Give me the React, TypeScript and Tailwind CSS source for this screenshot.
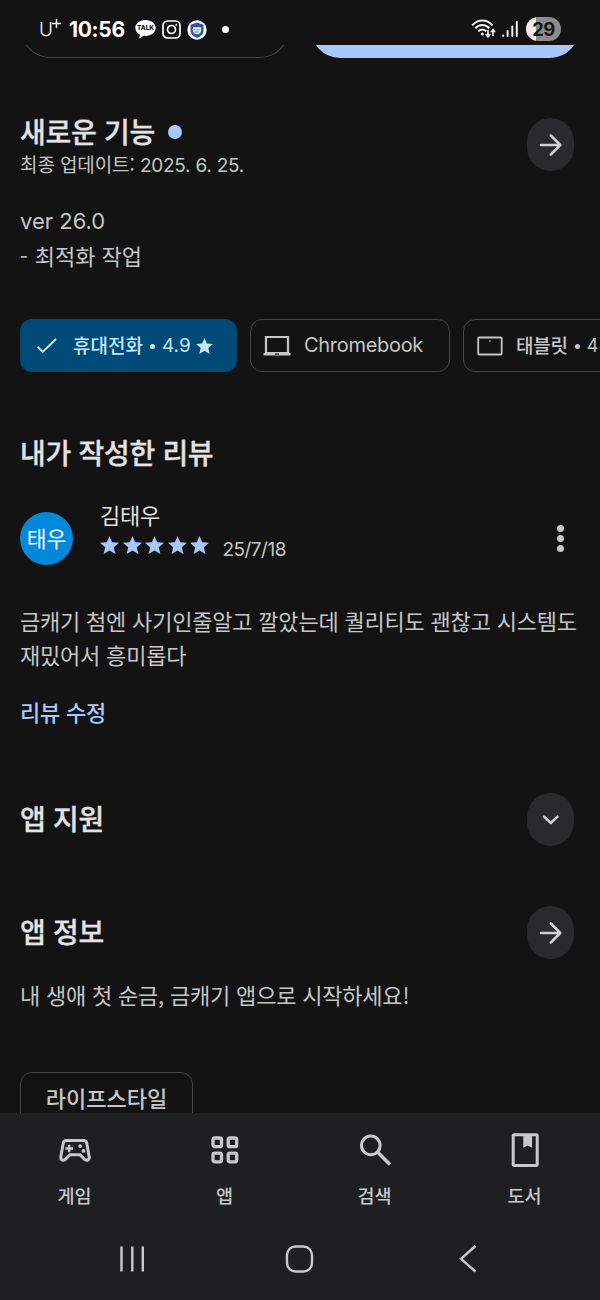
import type { ReactNode } from "react";
import clsx from "clsx";

const STAR = "M12 17.270L18.180 21l-1.640-7.030L22 9.240l-7.190-.610L12 2 9.190 8.630 2 9.240l5.460 4.730L5.820 21z";

function Latin({ children, className }: { children: ReactNode; className?: string }) {
  return <span className={clsx("font-['Inter','Noto_Sans_CJK_KR',sans-serif]", className)}>{children}</span>;
}

function StatusBar() {
  return (
    <header className="flex h-[45px] shrink-0 items-start pl-[39px] pr-[39px] pt-[17px] text-white">
      <div className="flex h-[25px] w-[30px] items-center font-['Inter',sans-serif]">
        <span className="text-[19px] font-light leading-[25px] tracking-[-0.6px]">U</span>
        <svg className="-mt-[12px]" width="9" height="9" viewBox="0 0 9 9" stroke="currentColor" strokeWidth="1.5">
          <path d="M4.5 0v9M0 4.5h9" />
        </svg>
      </div>
      <span className="w-[66px] whitespace-nowrap font-['Inter',sans-serif] text-[21px] font-bold leading-[25px] tracking-[-0.3px]">
        10:56
      </span>
      <svg className="mt-[2px]" width="21" height="21" viewBox="0 0 21 21">
        <path
          fill="#fff"
          d="M10.5 1C4.8 1 .3 4.500 .3 9c0 2.900 1.900 5.400 4.700 6.800l-.8 3.700 4.300-2.700c.7.1 1.300.1 2 .1 5.700 0 10.200-3.500 10.200-7.900S16.200 1 10.500 1z"
        />
        <text x="10.5" y="11.4" textAnchor="middle" fontFamily="Inter" fontWeight="800" fontSize="6.4" fill="#151515">
          TALK
        </text>
      </svg>
      <svg className="ml-[6px] mt-[3px]" width="19" height="19" viewBox="0 0 19 19" fill="none" stroke="#fff" strokeWidth="1.7">
        <rect x="1" y="1" width="17" height="17" rx="4.5" />
        <circle cx="9.5" cy="9.5" r="4" />
        <circle cx="14.3" cy="4.7" r="1" fill="#fff" stroke="none" />
      </svg>
      <svg className="ml-[6px] mt-[3px]" width="20" height="20" viewBox="0 0 20 20">
        <circle cx="10" cy="10" r="9.7" fill="#fff" />
        <path d="M10 2.500l6.500 2.300v5.400c0 3.700-2.700 6.200-6.500 7.700-3.800-1.500-6.500-4-6.500-7.700V4.800z" fill="#2c58a5" />
        <path d="M6 7.300h8v3.400c0 2.200-1.800 3.600-4 3.600s-4-1.400-4-3.600z" fill="#eef1f5" />
        <path d="M5 9.700h8" stroke="#d6a34c" strokeWidth="1.2" />
        <path d="M7.800 12h4" stroke="#4e78ba" />
      </svg>
      <span className="ml-[15px] mt-[9px] size-[7px] rounded-full bg-white" />
      <div className="ml-auto flex items-start">
        <svg className="mt-[2px]" width="26" height="20" viewBox="0 0 26 20" fill="none" stroke="#f1f1f1" strokeWidth="2">
          <path d="M1.200 6.300C7-.1 15.800-.1 21.500 6.300" />
          <path d="M4.300 9.300c4-4.300 10-4.300 14 0" />
          <path d="M7.300 12.400c2.500-2.500 5.600-2.500 8 0" />
          <circle cx="11.3" cy="15" r="1.5" fill="#f1f1f1" stroke="none" />
          <path d="M17 11v6M22 17v-5" strokeWidth="1.6" />
          <path d="M14 15.200h6l-3 4zM19 13.300h6l-3-4z" fill="#f1f1f1" stroke="none" />
        </svg>
        <svg className="ml-[5px] mt-[3px]" width="16" height="18" viewBox="0 0 16 18" stroke="#f1f1f1" strokeWidth="2" strokeLinecap="round">
          <path d="M1.200 15.500v.5M5.600 11v5M10.300 6.500V16M14.800 2v14" />
        </svg>
        <span className="ml-[8px] flex h-[24px] w-[35px] items-center justify-center rounded-full bg-[linear-gradient(90deg,#ececec_29%,#8c8c8c_29%)] font-['Inter',sans-serif] text-[18.5px] font-bold leading-none tracking-[-0.6px] text-[#171717]">
          29
        </span>
      </div>
    </header>
  );
}

function RoundButton({ icon }: { icon: "arrow" | "chevron" }) {
  return (
    <button className="flex h-[53px] w-[47px] items-center justify-center rounded-full bg-[#282a2c]">
      <svg width="24" height="24" viewBox="0 0 24 24" fill="none" stroke="#d0d0d0" strokeWidth="2.5" strokeLinecap="round" strokeLinejoin="round">
        {icon === "arrow" ? <path d="M2 12h19M11.800 2.500l9.500 9.500-9.500 9.500" /> : <path d="M5 8.700L11.800 15l6.700-6.300" />}
      </svg>
    </button>
  );
}

function SectionTitle({ children }: { children: ReactNode }) {
  return (
    <h2 className="text-[28px] font-medium leading-[34px] tracking-[-0.3px] text-[#e3e3e3] [-webkit-text-stroke:0.3px]">
      {children}
    </h2>
  );
}

function DeviceChips() {
  return (
    <div className="mt-[46px] flex h-[53px] gap-[14px] overflow-hidden text-[19px] font-medium leading-[27px] text-[#c4c7c5]">
      <div className="flex w-[217px] shrink-0 items-center rounded-[12px] bg-[#004a77] pl-[16px] text-[#c2e7ff]">
        <svg width="22" height="18" viewBox="0 0 22 18" fill="none" stroke="currentColor" strokeWidth="2">
          <path d="M1.500 9.700l5.200 5.200L20 2" />
        </svg>
        <span className="-mt-[2px] ml-[15px] whitespace-nowrap">휴대전화</span>
        <span className="ml-[7px] mt-[1px] size-[5px] rounded-full bg-current" />
        <Latin className="ml-[7px] font-normal">4.9</Latin>
        <svg className="ml-[5px]" width="17" height="16" viewBox="2 2 20 19" fill="currentColor">
          <path d={STAR} />
        </svg>
      </div>
      <div className="-ml-[1px] flex w-[200px] shrink-0 items-center rounded-[12px] border-[1.5px] border-[#444746] pl-[12px]">
        <svg width="28" height="22" viewBox="0 0 28 22">
          <path d="M3 2h22v16H3z" fill="none" stroke="currentColor" strokeWidth="2.2" />
          <path d="M.5 17.800h27v2.700H.5z" fill="currentColor" />
          <path d="M12 18.500h4v1.200h-4z" fill="#131314" />
        </svg>
        <Latin className="ml-[13px] text-[20px] font-normal tracking-[-0.3px]">Chromebook</Latin>
      </div>
      <div className="-ml-[1px] flex w-[217px] shrink-0 items-center rounded-[12px] border-[1.5px] border-[#444746] pl-[13px]">
        <svg width="26" height="20" viewBox="0 0 26 20">
          <rect x="1.2" y="1.5" width="23.5" height="17" rx="1" fill="none" stroke="currentColor" strokeWidth="1.8" />
          <path d="M12 5h2" stroke="currentColor" />
        </svg>
        <span className="-mt-[2px] ml-[13px] whitespace-nowrap tracking-[-0.2px]">태블릿</span>
        <span className="ml-[7px] mt-[1px] size-[5px] rounded-full bg-current" />
        <Latin className="ml-[7px] text-[18px] font-normal tracking-[-0.5px]">4</Latin>
      </div>
    </div>
  );
}

function MyReview() {
  return (
    <section className="mt-[63px]">
      <SectionTitle>내가 작성한 리뷰</SectionTitle>
      <div className="mt-[30px] flex h-[68px]">
        <div className="mt-[13px] flex size-[53px] items-center justify-center rounded-full bg-[#0288d8] pb-[2px] text-[21.5px] leading-[30px] text-white">
          태우
        </div>
        <div className="ml-[27px]">
          <p className="text-[22px] leading-[30px] tracking-[-0.2px] text-[#e3e3e3]">김태우</p>
          <div className="flex h-[34px] items-start text-[#a8c7fa]">
            <div className="mt-[7px] flex gap-[3.6px]">
              {[1, 2, 3, 4, 5].map((n) => (
                <svg key={n} width="19" height="18" viewBox="2 2 20 19" fill="currentColor">
                  <path d={STAR} />
                </svg>
              ))}
            </div>
            <Latin className="ml-[13px] mt-[9px] text-[19px] leading-[24px] tracking-[-0.5px] text-[#c4c7c5]">25/7/18</Latin>
          </div>
        </div>
        <div className="ml-auto mr-[36px] mt-[26px] flex flex-col gap-[3px]">
          <span className="size-[7px] rounded-full bg-[#c7c7c7]" />
          <span className="size-[7px] rounded-full bg-[#c7c7c7]" />
          <span className="size-[7px] rounded-full bg-[#c7c7c7]" />
        </div>
      </div>
      <p className="mt-[37px] whitespace-nowrap text-[22px] leading-[33.5px] tracking-[-0.2px]">
        금캐기 첨엔 사기인줄알고 깔았는데 퀄리티도 괜찮고 시스템도
        <br />
        재밌어서 흥미롭다
      </p>
      <p className="mt-[24px] text-[22px] font-medium leading-[32px] tracking-[-0.2px] text-[#a8c7fa]">리뷰 수정</p>
    </section>
  );
}

const tabs = [
  {
    label: "게임",
    icon: (
      <>
        <path d="M9.300 8.500h17.400c1.600 0 2.700 1 3 2.500l2.500 13.700c.5 3.500-3 4.500-5 2.300L23 22.700H13L8.800 27c-2 2.200-5.500 1.200-5-2.300L6.300 11c.3-1.500 1.400-2.500 3-2.500z" strokeWidth="3" />
        <path d="M12.200 12.700v7.600M8.400 16.500H16" strokeWidth="2.5" />
        <circle cx="23.2" cy="14.1" r="1.9" fill="currentColor" stroke="none" />
        <circle cx="26.5" cy="18.9" r="1.9" fill="currentColor" stroke="none" />
      </>
    ),
  },
  {
    label: "앱",
    icon: (
      <g strokeWidth="3.3">
        <rect x="6" y="6" width="8.5" height="8.700" rx="1.8" />
        <rect x="21.2" y="6" width="8.5" height="8.700" rx="1.8" />
        <rect x="6" y="21.2" width="8.5" height="8.700" rx="1.8" />
        <rect x="21.2" y="21.2" width="8.5" height="8.700" rx="1.8" />
      </g>
    ),
  },
  {
    label: "검색",
    icon: (
      <>
        <circle cx="13.8" cy="13.4" r="9.3" strokeWidth="3" />
        <path d="M20.700 20.200L33 32.500" strokeWidth="3.4" />
      </>
    ),
  },
  {
    label: "도서",
    icon: (
      <>
        <rect x="6.2" y="2.7" width="24" height="30.8" rx="1.2" strokeWidth="3" />
        <path d="M16.300 3h8.800v12.800l-4.400-2.300-4.400 2.300z" fill="currentColor" stroke="none" />
      </>
    ),
  },
];

function BottomBar() {
  return (
    <footer className="h-[187px] shrink-0 bg-[#1e1f20] text-[#c7c9ca]">
      <nav className="grid grid-cols-4 pt-[19px]">
        {tabs.map((tab) => (
          <div key={tab.label} className="flex flex-col items-center">
            <svg width="36" height="36" viewBox="0 0 36 36" fill="none" stroke="currentColor">
              {tab.icon}
            </svg>
            <span className="mr-[1px] mt-[14px] text-[18.5px] font-medium leading-[27px]">{tab.label}</span>
          </div>
        ))}
      </nav>
      <div className="mt-[35px] flex justify-between pl-[117px] pr-[121px]">
        <svg width="30" height="30" viewBox="0 0 30 30" stroke="currentColor" strokeWidth="2.4">
          <path d="M4.500 2.500v25M15.300 2.500v25M25.800 2.500v25" />
        </svg>
        <svg width="30" height="30" viewBox="0 0 30 30" fill="none" stroke="currentColor" strokeWidth="2.4">
          <rect x="2" y="2.5" width="25" height="25" rx="8.5" />
        </svg>
        <svg width="26" height="30" viewBox="0 0 26 30" fill="none" stroke="currentColor" strokeWidth="2.4">
          <path d="M22.500 2L8 14.800l14.500 12.900" />
        </svg>
      </div>
    </footer>
  );
}

export default function App() {
  return (
    <div lang="ko" className="flex h-[1300px] w-[600px] flex-col overflow-hidden bg-[#131314] font-['Noto_Sans_CJK_KR',sans-serif] text-[#c4c7c5]">
      <StatusBar />
      <div className="flex h-[13px] shrink-0 items-end gap-[20px] overflow-hidden px-[20px]">
        <div className="h-[64px] w-[270px] shrink-0 rounded-[30px/32px] border-[1.5px] border-[#444746]" />
        <div className="h-[64px] w-[270px] shrink-0 rounded-[30px/32px] bg-[#a8c7fa]" />
      </div>

      <main className="min-h-0 flex-1 overflow-hidden pl-[20px]">
        <section className="mt-[56px]">
          <div className="flex h-[66px] justify-between pr-[26px]">
            <div>
              <div className="flex items-center gap-[13px]">
                <SectionTitle>새로운 기능</SectionTitle>
                <span className="mt-[1px] size-[14px] rounded-full bg-[#a8c7fa]" />
              </div>
              <p className="text-[19px] leading-[32px] tracking-[-0.1px]">
                최종 업데이트: <Latin className="tracking-[-0.25px]">2025. 6. 25.</Latin>
              </p>
            </div>
            <div className="mt-[4px]">
              <RoundButton icon="arrow" />
            </div>
          </div>
          <div className="mt-[24px] h-[69px] text-[22px] leading-[34px]">
            <p className="h-[34px] font-['Inter',sans-serif]">ver 26.0</p>
            <p className="flex h-[34px] gap-[7px]">
              <span>-</span>
              <span>최적화 작업</span>
            </p>
          </div>
          <DeviceChips />
        </section>

        <MyReview />

        <section className="mt-[66px] flex h-[53px] items-center justify-between pr-[26px]">
          <div className="pb-[3px]">
            <SectionTitle>앱 지원</SectionTitle>
          </div>
          <RoundButton icon="chevron" />
        </section>

        <section className="mt-[60px]">
          <div className="flex h-[53px] items-center justify-between pr-[26px]">
            <div className="pb-[3px]">
              <SectionTitle>앱 정보</SectionTitle>
            </div>
            <RoundButton icon="arrow" />
          </div>
          <p className="mt-[19px] text-[22px] leading-[32px] tracking-[-0.2px]">내 생애 첫 순금, 금캐기 앱으로 시작하세요!</p>
          <div className="mt-[62px] flex h-[53px] w-[173px] items-center justify-center rounded-[12px] border-[1.5px] border-[#444746] pb-[4px] text-[22px] font-medium leading-[30px]">
            라이프스타일
          </div>
        </section>
      </main>

      <BottomBar />
    </div>
  );
}
